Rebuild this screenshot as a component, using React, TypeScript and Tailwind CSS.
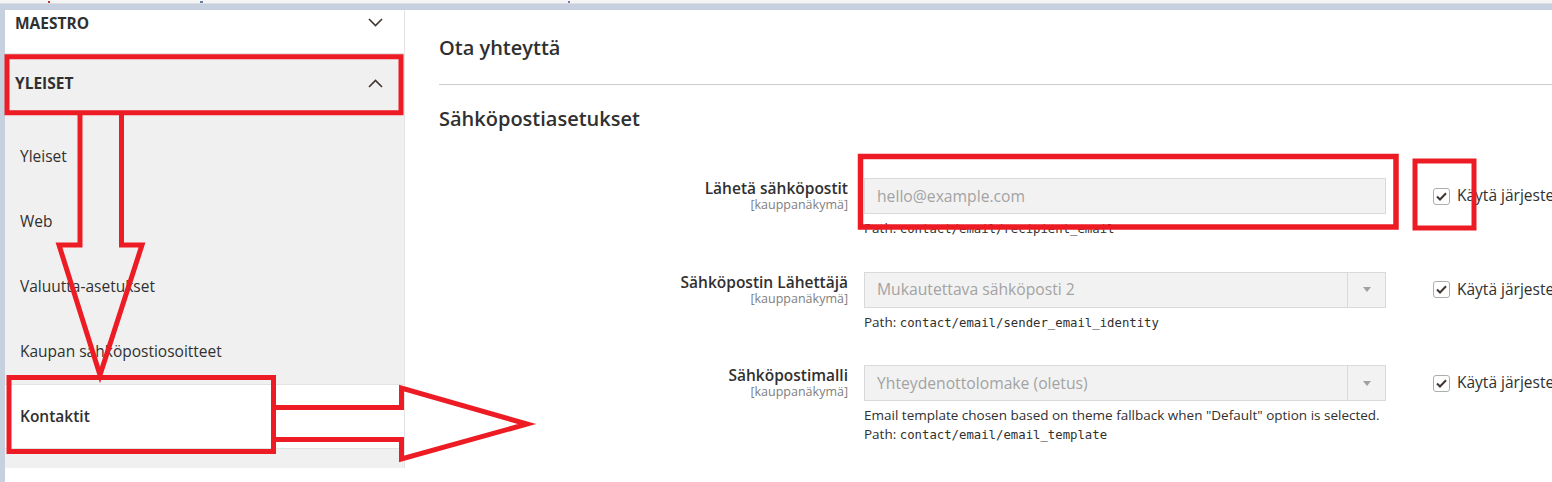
import React from 'react';

const Chevron: React.FC<{ up?: boolean }> = ({ up }) => (
  <svg width="15" height="9" viewBox="0 0 15 9" className="shrink-0">
    <path
      d={up ? 'M1 8 L7.5 1.5 L14 8' : 'M1 1 L7.5 7.5 L14 1'}
      fill="none"
      stroke="#41362f"
      strokeWidth="1.6"
    />
  </svg>
);

const CheckBox: React.FC = () => (
  <span className="flex h-[17px] w-[17px] shrink-0 items-center justify-center rounded-[3px] border border-[#adadad] bg-white">
    <svg width="11" height="9" viewBox="0 0 11 9">
      <path d="M1 4.5 L4 7.5 L10 1.2" fill="none" stroke="#41362f" strokeWidth="2" />
    </svg>
  </span>
);

interface FieldRowProps {
  label: string;
  value: string;
  select?: boolean;
  notes: React.ReactNode[];
}

const FieldRow: React.FC<FieldRowProps> = ({ label, value, select, notes }) => (
  <div className="flex items-start">
    <div className="w-[409px] shrink-0 text-right">
      <div className="text-[15.5px] font-semibold leading-[20px] text-[#303030]">{label}</div>
      <div className="text-[12.5px] leading-[14px] text-[#808080]">[kauppanäkymä]</div>
    </div>
    <div className="ml-[16px] w-[522px] shrink-0">
      <div className="flex h-[36px] items-stretch border border-[#d9d9d9] bg-[#f2f2f2]">
        <div className="flex flex-1 items-center pl-[12px] pt-[1px] text-[15.7px] text-[#a3a3a3]">{value}</div>
        {select && (
          <div className="flex w-[38px] items-center justify-center border-l border-[#d9d9d9]">
            <span className="h-0 w-0 border-x-[4px] border-t-[5px] border-x-transparent border-t-[#a0a0a0]" />
          </div>
        )}
      </div>
      <div className="mt-[5px] text-[13.5px] leading-[19px] text-[#303030]">
        {notes.map((n, i) => (
          <div key={i} className="whitespace-nowrap">{n}</div>
        ))}
      </div>
    </div>
    <div className="ml-[47px] flex h-[36px] items-center gap-[7px] whitespace-nowrap">
      <CheckBox />
      <span className="text-[15.5px] text-[#303030]">Käytä järjestelmän arvoa</span>
    </div>
  </div>
);

const PathNote: React.FC<{ path: string }> = ({ path }) => (
  <>
    Path: <span className="font-['DejaVu_Sans_Mono',monospace] text-[12.3px]">{path}</span>
  </>
);

const Sidebar: React.FC = () => {
  const items = ['Yleiset', 'Web', 'Valuutta-asetukset', 'Kaupan sähköpostiosoitteet'];
  return (
    <div className="w-[400px] shrink-0 self-start border-r border-[#e3e3e3]">
      <div className="flex h-[44px] items-start justify-between border-b border-[#e3e3e3] bg-white pl-[10px] pr-[21px] pt-[3px]">
        <span className="text-[15.5px] font-bold uppercase leading-[20px] text-[#303030]">Maestro</span>
        <span className="pt-[5px]">
          <Chevron />
        </span>
      </div>
      <div className="flex h-[62px] items-center justify-between bg-[#f0f0f0] pb-[4px] pl-[10px] pr-[21px]">
        <span className="text-[15.5px] font-bold uppercase leading-[20px] text-[#303030]">Yleiset</span>
        <Chevron up />
      </div>
      <div className="bg-[#f0f0f0] pb-[19px] pt-[8px]">
        {items.map((item) => (
          <div key={item} className="flex h-[65px] items-center pl-[15px] text-[15.5px] text-[#303030]">
            {item}
          </div>
        ))}
        <div className="flex h-[65px] items-center border-y border-[#e3e3e3] bg-white pl-[15px] text-[15.5px] font-semibold text-[#303030]">
          Kontaktit
        </div>
      </div>
    </div>
  );
};

const Annotations: React.FC = () => (
  <svg
    className="pointer-events-none absolute left-0 top-0"
    width="1552"
    height="482"
    viewBox="0 0 1552 482"
  >
    <g fill="none" stroke="#ed1c24" strokeWidth="5" strokeLinejoin="miter" strokeMiterlimit="10">
      <rect x="7" y="56.75" width="394" height="56" />
      <rect x="860.5" y="156.5" width="535.5" height="70.5" strokeWidth="5.5" />
      <rect x="1415" y="161" width="59" height="67" />
      <rect x="9" y="377.5" width="264.5" height="74" />
      <polyline points="80,115 80,245 59,245 100,375 142,245 121.5,245 121.5,115" />
      <polyline points="276,407.5 401.5,407.5 401.5,388 527,424 401.5,459 401.5,439.5 276,439.5" />
    </g>
  </svg>
);

export default function App() {
  return (
    <div className="relative h-[482px] w-[1552px] overflow-hidden bg-white font-['Open_Sans',sans-serif] text-[#303030]">
      <div className="flex h-[3px] bg-[#f4f4f4]">
        <span className="ml-[48px] mt-[1px] h-[2px] w-[2px] bg-[#c0392b]" />
        <span className="ml-[150px] mt-[1px] h-[2px] w-[3px] bg-[#6b7fa3]" />
        <span className="ml-[365px] mt-[1px] h-[2px] w-[2px] bg-[#8e6bb0]" />
      </div>
      <div className="h-[1px] bg-[#dcdfe4]" />
      <div className="h-[6px] bg-[#c7d0df]" />
      <div className="flex h-[472px]">
        <div className="w-[5px] shrink-0 bg-[#c7d0df]" />
        <Sidebar />
        <div className="min-w-0 flex-1 pl-[34px]">
          <div className="border-b border-[#cccccc] pb-[22px] pt-[24px]">
            <h1 className="whitespace-nowrap text-[20px] font-semibold leading-[28px] text-[#303030]">Ota yhteyttä</h1>
          </div>
          <h2 className="mt-[20px] whitespace-nowrap text-[20px] font-semibold leading-[28px] text-[#303030]">
            Sähköpostiasetukset
          </h2>
          <div className="mt-[45px] flex flex-col gap-[32.5px]">
            <FieldRow
              label="Lähetä sähköpostit"
              value="hello@example.com"
              notes={[<PathNote key="p" path="contact/email/recipient_email" />]}
            />
            <FieldRow
              label="Sähköpostin Lähettäjä"
              value="Mukautettava sähköposti 2"
              select
              notes={[<PathNote key="p" path="contact/email/sender_email_identity" />]}
            />
            <FieldRow
              label="Sähköpostimalli"
              value="Yhteydenottolomake (oletus)"
              select
              notes={[
                'Email template chosen based on theme fallback when "Default" option is selected.',
                <PathNote key="p" path="contact/email/email_template" />,
              ]}
            />
          </div>
        </div>
      </div>
      <Annotations />
    </div>
  );
}
